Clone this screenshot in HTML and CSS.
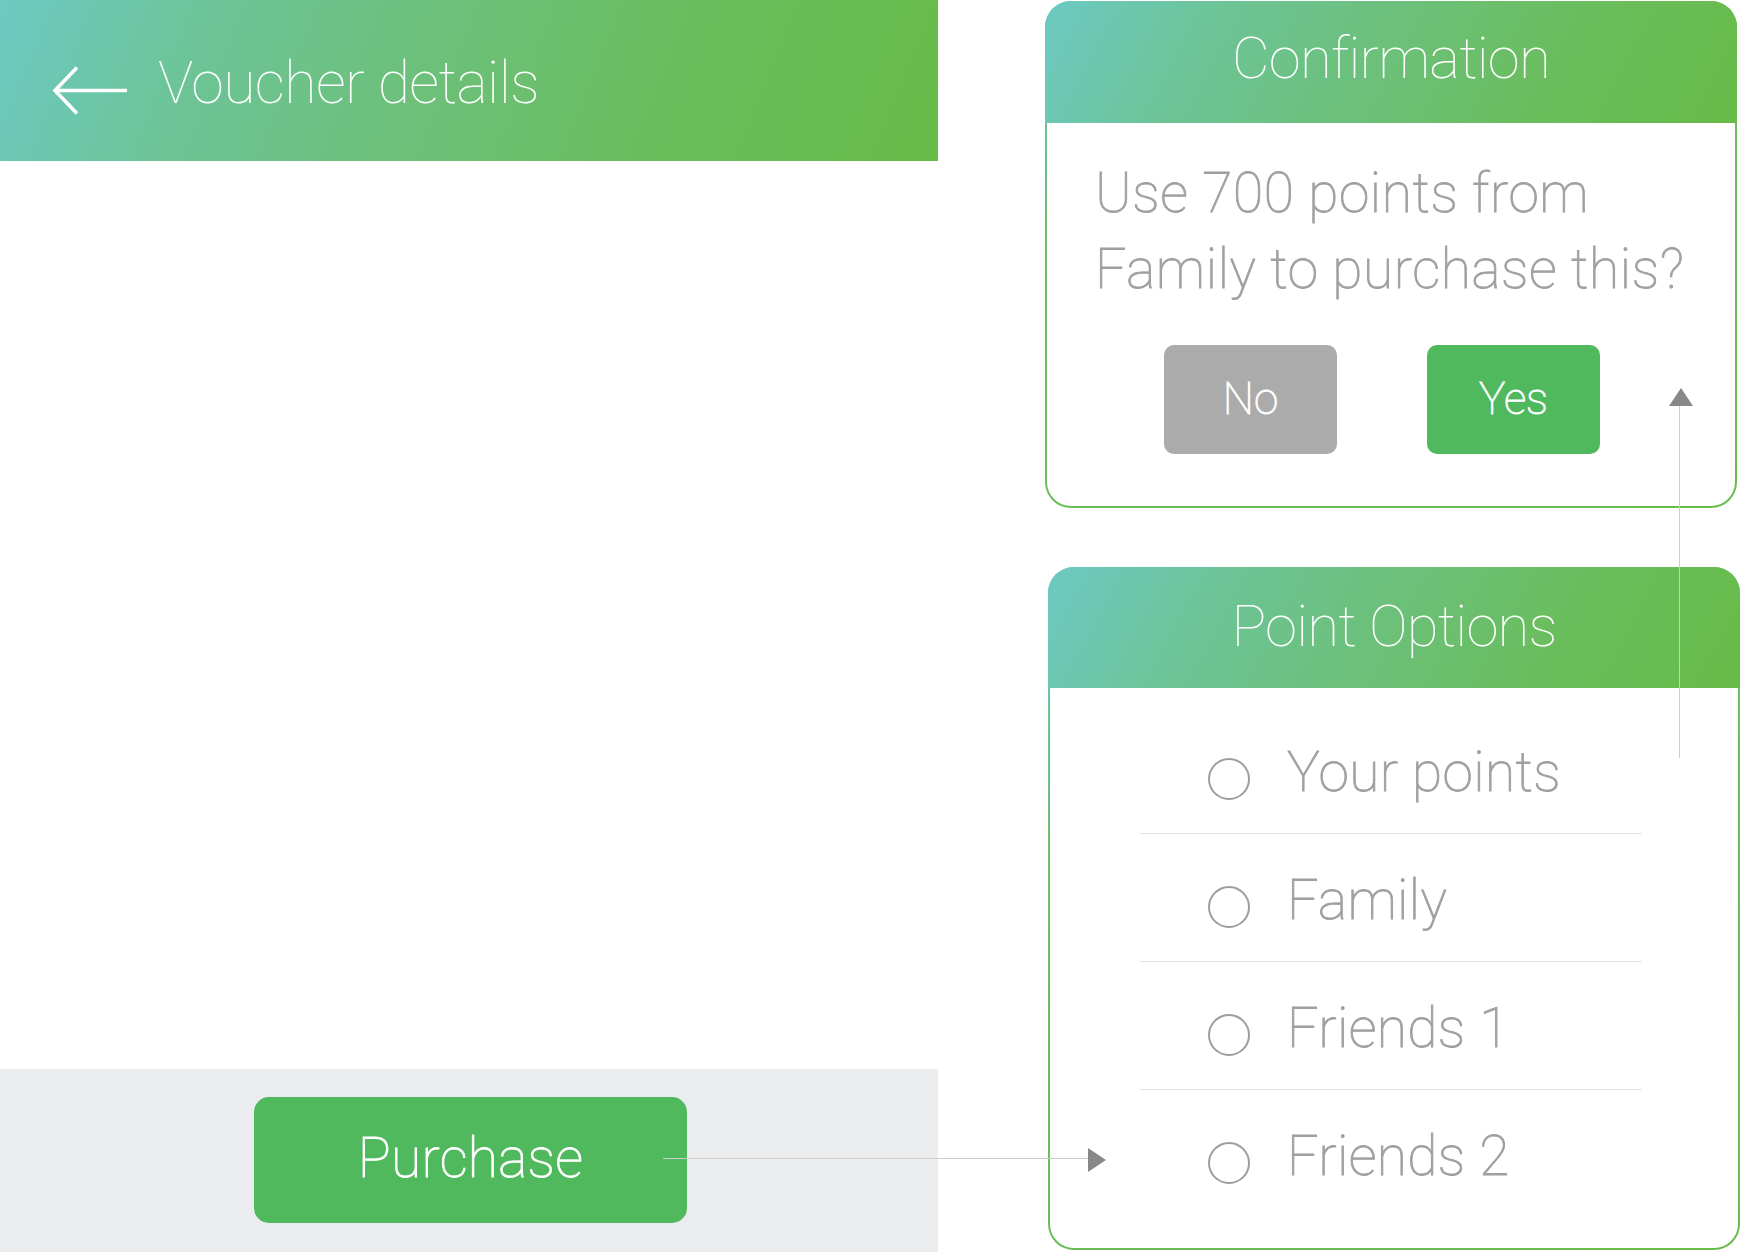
FILE: index.html
```html
<!DOCTYPE html>
<html lang="en">
<head>
<meta charset="utf-8">
<title>Voucher details</title>
<link rel="stylesheet" href="styles.css">
</head>
<body>
<div class="page">
  <section class="screen">
    <header class="topbar">
      <svg class="back" width="76" height="50" viewBox="0 0 76 50" aria-hidden="true">
        <path d="M75 24.5 H3 M25 1.5 L3 24.5 L25 47.5" fill="none" stroke="#fff" stroke-width="3.6" stroke-linecap="butt" stroke-linejoin="miter"/>
      </svg>
      <h1 class="topbar-title">Voucher details</h1>
    </header>
    <div class="screen-body"></div>
    <footer class="bottombar">
      <button class="btn-purchase">Purchase</button>
    </footer>
  </section>

  <aside class="dialogs">
    <div class="card card-confirm">
      <div class="card-head">Confirmation</div>
      <div class="card-body confirm-body">
        <p class="confirm-text">Use 700 points from<br>Family to purchase this?</p>
        <div class="confirm-actions">
          <button class="btn btn-no">No</button>
          <button class="btn btn-yes">Yes</button>
        </div>
      </div>
    </div>

    <div class="card card-options">
      <div class="card-head">Point Options</div>
      <div class="card-body options-body">
        <div class="option"><span class="radio"></span><span class="option-label">Your points</span></div>
        <div class="option"><span class="radio"></span><span class="option-label">Family</span></div>
        <div class="option"><span class="radio"></span><span class="option-label">Friends 1</span></div>
        <div class="option option-last"><span class="radio"></span><span class="option-label">Friends 2</span></div>
      </div>
    </div>
  </aside>

  <div class="link link-h"></div>
  <div class="arrow arrow-right"></div>
  <div class="link link-v"></div>
  <div class="arrow arrow-up"></div>
</div>
</body>
</html>
```

FILE: styles.css
```css
* { box-sizing: border-box; }

html, body {
  margin: 0;
  padding: 0;
  background: #ffffff;
}

body {
  font-family: Roboto, "Noto Sans", "Liberation Sans", sans-serif;
  width: 1740px;
  height: 1252px;
  overflow: hidden;
}

.page {
  position: relative;
  display: flex;
  width: 1740px;
  height: 1252px;
}

/* text weight between Roboto Thin and Light */
.btn-purchase,
.confirm-text,
.btn,
.option-label {
  font-weight: 100;
  -webkit-text-stroke: 0.9px currentColor;
}

/* left phone screen */
.screen {
  width: 938px;
  height: 1252px;
  display: flex;
  flex-direction: column;
}

.topbar {
  height: 161px;
  flex: none;
  display: flex;
  align-items: flex-start;
  padding-left: 52px;
  background: linear-gradient(112deg, #6dc9c3 0%, #6cc496 22%, #6cc07a 45%, #6abd5b 72%, #68bb47 100%);
}

.back {
  display: block;
  flex: none;
  margin-top: 66px;
}

.topbar-title {
  margin: 49px 0 0 30px;
  font-size: 59px;
  font-weight: 100;
  color: #ffffff;
  line-height: 1.15;
  letter-spacing: -0.6px;
}

.screen-body {
  flex: 1;
}

.bottombar {
  height: 183px;
  flex: none;
  background: #ebecee;
  padding: 28px 0 0 254px;
}

.btn-purchase {
  display: flex;
  align-items: center;
  justify-content: center;
  width: 433px;
  height: 126px;
  border: 0;
  border-radius: 15px;
  background: #50b95e;
  color: #ffffff;
  font-family: Roboto, "Noto Sans", "Liberation Sans", sans-serif;
  font-size: 55px;
  letter-spacing: 0.3px;
  padding: 0 0 4px 0;
}

/* right column dialogs */
.dialogs {
  margin-left: 107px;
  padding-top: 1px;
  display: flex;
  flex-direction: column;
}

.card {
  width: 692px;
  border-radius: 26px;
  padding: 0 2px 2px 2px;
  background: linear-gradient(160deg, #6cc9c1 0%, #6bbf6a 30%, #69bc4a 100%);
}

.card-head {
  margin: 0 -2px;
  border-radius: 26px 26px 0 0;
  display: flex;
  align-items: center;
  justify-content: center;
  color: #ffffff;
  font-size: 58px;
  font-weight: 100;
  letter-spacing: -0.8px;
  background: linear-gradient(118deg, #6dc9c3 0%, #6cc496 24%, #6cc07a 48%, #6abd5b 74%, #68bb47 100%);
}

.card-body {
  background: #ffffff;
  border-radius: 0 0 24px 24px;
}

.card-confirm {
  height: 507px;
}

.card-confirm .card-head {
  height: 122px;
  padding-bottom: 8px;
}

.confirm-body {
  height: 383px;
  padding: 32px 0 0 48px;
}

.confirm-text {
  margin: 0;
  font-size: 55px;
  line-height: 76px;
  letter-spacing: 0.6px;
  color: #a0a0a0;
}

.confirm-actions {
  display: flex;
  gap: 90px;
  margin-top: 38px;
  padding-left: 69px;
}

.btn {
  width: 173px;
  height: 109px;
  border: 0;
  border-radius: 10px;
  color: #ffffff;
  font-family: Roboto, "Noto Sans", "Liberation Sans", sans-serif;
  font-size: 44px;
  padding: 0 0 2px 0;
}

.btn-no { background: #aaabaa; }
.btn-yes { background: #50b95e; }

.card-options {
  margin-top: 59px;
  margin-left: 3px;
  height: 683px;
}

.card-options .card-head {
  height: 121px;
  padding-bottom: 4px;
}

.options-body {
  height: 560px;
  padding-top: 18px;
}

.option {
  display: flex;
  align-items: center;
  height: 128px;
  margin-left: 90px;
  width: 502px;
  padding: 18px 0 0 68px;
  border-bottom: 1px solid #e2e2e2;
}

.option-last {
  border-bottom-color: transparent;
}

.radio {
  flex: none;
  width: 42px;
  height: 42px;
  border: 2px solid #9d9d9d;
  border-radius: 50%;
}

.option-label {
  margin-left: 37px;
  margin-bottom: 12px;
  font-size: 55px;
  letter-spacing: 0.4px;
  color: #a0a0a0;
  line-height: 1;
}

/* flow connectors (annotations over the content) */
.link {
  position: absolute;
  background: #cccccc;
}

.link-h {
  left: 663px;
  top: 1158px;
  width: 425px;
  height: 1px;
}

.link-v {
  left: 1679px;
  top: 404px;
  width: 1px;
  height: 354px;
}

.arrow {
  position: absolute;
  width: 0;
  height: 0;
}

.arrow-right {
  left: 1088px;
  top: 1148px;
  border-top: 12px solid transparent;
  border-bottom: 12px solid transparent;
  border-left: 18px solid #888888;
}

.arrow-up {
  left: 1669px;
  top: 388px;
  border-left: 12px solid transparent;
  border-right: 12px solid transparent;
  border-bottom: 18px solid #888888;
}
```
